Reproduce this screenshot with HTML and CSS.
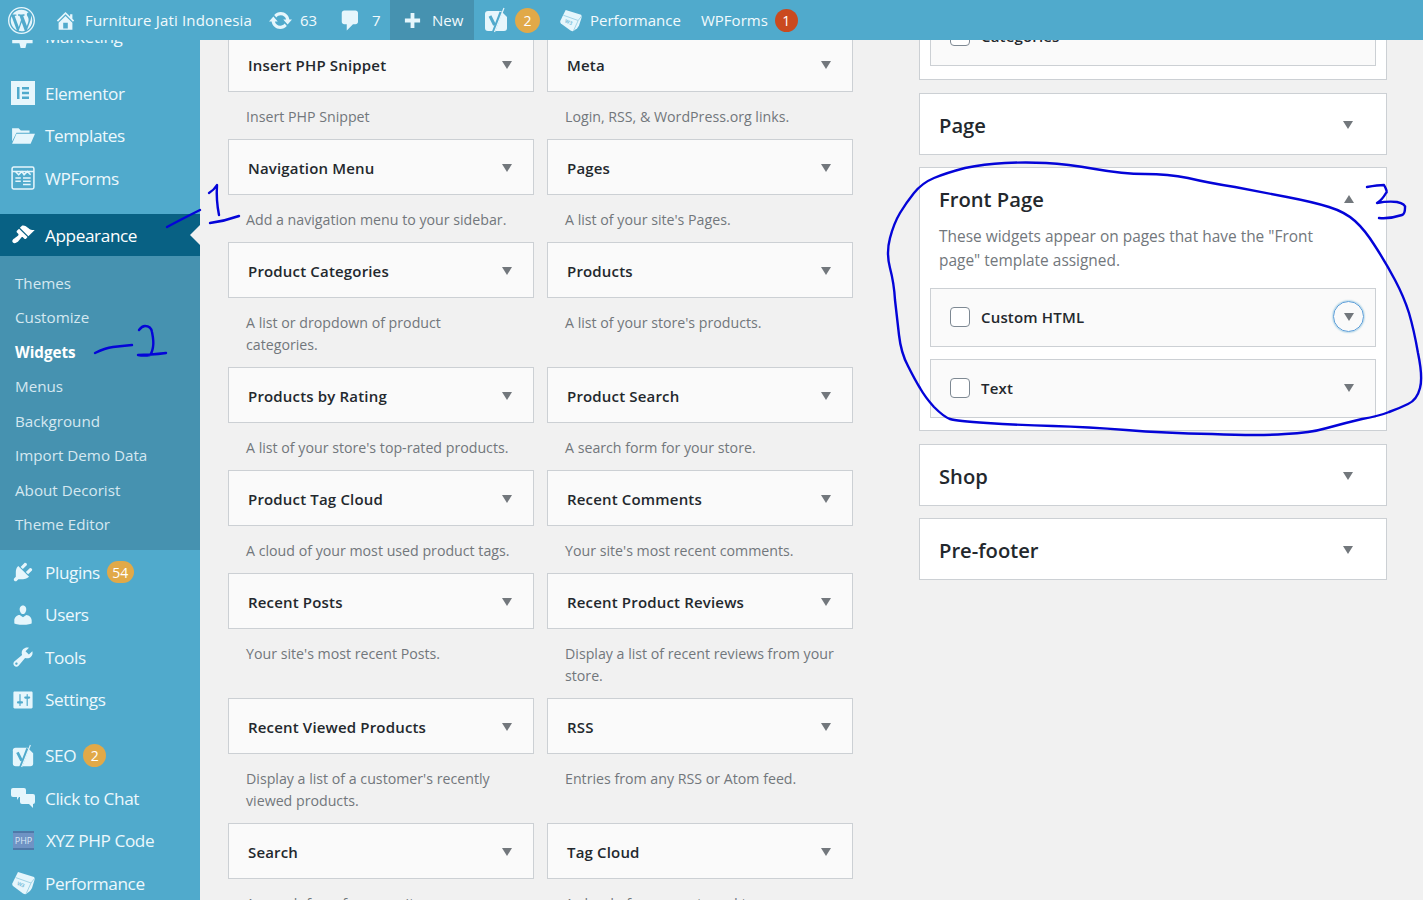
FILE: index.html
```html
<!DOCTYPE html>
<html lang="en">
<head>
    <meta charset="UTF-8">
    <meta name="viewport" content="width=device-width, initial-scale=1.0">
    <title>Widgets - Furniture Jati Indonesia</title>
    <link rel="stylesheet" href="styles.css">
</head>
<body>
    <!-- top admin bar -->
    <header class="adminbar">
        <a class="bar-item bar-logo"><svg class="bar-icon-logo" viewBox="0 0 20 20"><path d="M20 10c0-5.52-4.48-10-10-10S0 4.48 0 10s4.48 10 10 10 10-4.48 10-10zM10 1.01c4.96 0 8.99 4.03 8.99 8.99s-4.03 8.99-8.99 8.99S1.01 14.96 1.01 10 5.04 1.01 10 1.01zM8.01 14.82L4.96 6.61c.49-.03 1.05-.08 1.05-.08.43-.05.38-1.01-.06-.99 0 0-1.29.1-2.13.1-.15 0-.33 0-.52-.01 1.44-2.17 3.9-3.6 6.7-3.6 2.09 0 3.99.79 5.41 2.09-.6-.08-1.45.35-1.45 1.42 0 .66.38 1.22.79 1.88.31.54.5 1.22.5 2.21 0 1.34-1.27 4.48-1.27 4.48l-2.71-7.5c.48-.03.75-.16.75-.16.43-.04.38-1.1-.05-1.08 0 0-1.3.11-2.14.11-.78 0-2.11-.11-2.11-.11-.43-.02-.48 1.06-.05 1.08l.84.08 1.12 3.04zm6.02 2.15L16.64 10s.67-1.69.39-3.81c.63 1.14.94 2.42.94 3.81 0 2.96-1.56 5.58-3.94 6.97zM2.68 6.77L6.5 17.25c-2.67-1.3-4.47-4.08-4.47-7.25 0-1.16.2-2.23.65-3.23zm7.45 4.53l2.29 6.25c-.75.27-1.57.42-2.42.42-.72 0-1.41-.11-2.06-.3z"/></svg></a>
        <a class="bar-item bar-site"><svg class="bar-icon" viewBox="0 0 20 20"><path d="M16 8.5l1.53 1.53-1.06 1.06L10 4.62l-6.47 6.47-1.06-1.06L10 2.5l4 4v-2h2v4zm-6-2.46l6 5.99V18H4v-5.97zM12 17v-5H8v5h4z"/></svg>Furniture Jati Indonesia</a>
        <a class="bar-item bar-updates"><svg class="bar-icon bar-icon-wide" viewBox="0 0 20 20"><path d="M10.2 3.28c3.53 0 6.43 2.61 6.92 6h2.08l-3.5 4-3.5-4h2.32c-.45-1.97-2.21-3.45-4.32-3.45-1.45 0-2.73.71-3.54 1.78L4.95 5.66C6.23 4.2 8.11 3.28 10.2 3.28zm-.4 13.44c-3.52 0-6.43-2.61-6.92-6H.8l3.5-4c1.17 1.33 2.33 2.67 3.5 4H5.48c.45 1.97 2.21 3.45 4.32 3.45 1.45 0 2.73-.71 3.54-1.78l1.71 1.95c-1.28 1.46-3.15 2.38-5.25 2.38z"/></svg>63</a>
        <a class="bar-item bar-comments"><svg class="bar-icon bar-icon-wide" viewBox="0 0 20 20"><path d="M5 2h9q.82 0 1.41.59T16 4v7q0 .82-.59 1.41T14 13h-2l-5 5v-5H5q-.82 0-1.41-.59T3 11V4q0-.82.59-1.41T5 2z"/></svg>7</a>
        <a class="bar-item bar-new"><svg class="bar-icon bar-icon-plus" viewBox="0 0 20 20"><path d="M18 8v4h-6v6H8v-6H2V8h6V2h4v6z"/></svg>New</a>
        <a class="bar-item bar-yoast"><svg class="bar-icon bar-icon-yoast" viewBox="0 0 24 26"><path d="M4 4h13l6 6v11a3 3 0 0 1-3 3H4a3 3 0 0 1-3-3V7a3 3 0 0 1 3-3z"/><path class="cut" d="M6 9l4.5 9M17 5l-8 21"/><path class="slash" d="M20 1l-9.500 24"/></svg><span class="badge badge-orange">2</span></a>
        <a class="bar-item bar-perf"><svg class="bar-icon bar-icon-cube" viewBox="0 0 24 24"><path d="M7 1l16 5q1 1 .5 3L21 17q-.5 1-2 3l-4 3q-1 .5-3-.5L2 15q-1-1-.7-2.500L4 7z"/><path class="cut-thin" d="M4.500 6.500L20 12l-5 11M20 12l3.500-4.500"/><text class="cube-mark" x="6" y="15" transform="rotate(22 9 14)">W3</text></svg>Performance</a>
        <a class="bar-item bar-forms">WPForms<span class="badge badge-red">1</span></a>
    </header>

    <div class="wrap">
        <!-- left menu -->
        <nav class="sidemenu">
            <ul class="menu-group">
                <li class="menu-item"><svg class="menu-icon" viewBox="0 0 20 20"><path d="M1 4h17v12h-5l-1 4H8l-1-4H1z"/></svg>Marketing</li>
            </ul>
            <ul class="menu-group">
                <li class="menu-item"><svg class="menu-icon icon-el" viewBox="0 0 24 24"><path fill-rule="evenodd" d="M0 0h24v24H0zM6 6v12h2.5V6zM11 6v2.500h7V6zM11 10.800v2.400h7v-2.400zM11 15.500V18h7v-2.500z"/></svg>Elementor</li>
                <li class="menu-item"><svg class="menu-icon" viewBox="0 0 22 20"><path d="M1 3h6l2 2h8v2H5L1 15zM5 8h17l-4 9H1z"/></svg>Templates</li>
                <li class="menu-item"><svg class="menu-icon" viewBox="0 0 22 22"><rect class="outline" x="1" y="1" width="20" height="20" rx="1.5"/><path class="outline" d="M1 5h20M4 5l3 3 3-3 2 3 3-3 3 3M4 11h5M11 11h7M4 14h5M11 14h7M11 17h7"/></svg>WPForms</li>
            </ul>
            <ul class="menu-group">
                <li class="menu-item menu-current"><svg class="menu-icon" viewBox="0 0 20 20"><path d="M14.48 11.06L7.41 3.99l1.5-1.5c.5-.56 2.3-.47 3.51.32 1.21.8 1.43 1.28 2.91 2.1 1.18.64 2.45 1.26 4.45.85zm-.71.71L6.7 4.7 4.93 6.47c-.39.39-.39 1.02 0 1.41l1.06 1.06c.39.39.39 1.03 0 1.42-.6.6-1.43 1.11-2.21 1.69-.35.26-.7.53-1.01.84C1.43 13.23.5 15.26 1.65 16.35c1.13 1.1 3.11.19 4.49-1.08.3-.3.58-.65.84-1 .58-.78 1.09-1.61 1.69-2.21.39-.39 1.02-.39 1.41 0l1.06 1.06c.39.39 1.02.39 1.41 0z"/></svg>Appearance</li>
                <li class="submenu">
                    <ul>
                        <li class="sub-item">Themes</li>
                        <li class="sub-item">Customize</li>
                        <li class="sub-item sub-current">Widgets</li>
                        <li class="sub-item">Menus</li>
                        <li class="sub-item">Background</li>
                        <li class="sub-item">Import Demo Data</li>
                        <li class="sub-item">About Decorist</li>
                        <li class="sub-item">Theme Editor</li>
                    </ul>
                </li>
                <li class="menu-item"><svg class="menu-icon" viewBox="0 0 20 20"><path d="M13.11 4.36L9.87 7.6 8 5.73l3.24-3.24c.35-.34 1.05-.2 1.56.32.52.51.66 1.21.31 1.55zm-8 1.77l.91-1.12 9.01 9.01-1.19.84c-.71.71-2.63 1.16-3.82 1.16H6.14L4.9 17.26c-.59.59-1.54.59-2.12 0-.59-.58-.59-1.53 0-2.12l1.24-1.24v-3.88c0-1.13.4-3.19 1.09-3.89zm7.26 3.97l3.24-3.24c.34-.35 1.04-.21 1.55.31.52.51.66 1.21.31 1.55l-3.24 3.25z"/></svg>Plugins<span class="badge badge-orange badge-wide">54</span></li>
                <li class="menu-item"><svg class="menu-icon" viewBox="0 0 20 20"><path d="M10 9.25c-2.27 0-2.73-3.44-2.73-3.44C7 4.02 7.82 2 9.97 2c2.16 0 2.98 2.02 2.71 3.81 0 0-.41 3.44-2.68 3.44zm0 2.57L12.72 10c2.39 0 4.52 2.33 4.52 4.53v2.49s-3.65 1.13-7.24 1.13c-3.65 0-7.24-1.13-7.24-1.13v-2.49c0-2.25 1.94-4.48 4.47-4.48z"/></svg>Users</li>
                <li class="menu-item"><svg class="menu-icon" viewBox="0 0 20 20"><path d="M16.68 9.77c-1.34 1.34-3.3 1.67-4.95.99l-5.41 6.52c-.99.99-2.59.99-3.58 0s-.99-2.59 0-3.57l6.52-5.42c-.68-1.65-.35-3.61.99-4.95 1.28-1.28 3.12-1.62 4.72-1.06l-2.89 2.89 2.82 2.82 2.86-2.87c.53 1.58.18 3.39-1.08 4.65zM3.81 16.21c.4.39 1.04.39 1.43 0 .4-.4.4-1.04 0-1.43-.39-.4-1.03-.4-1.43 0-.39.39-.39 1.03 0 1.43z"/></svg>Tools</li>
                <li class="menu-item"><svg class="menu-icon" viewBox="0 0 20 20"><path fill-rule="evenodd" d="M18 16V4c0-.55-.45-1-1-1H3c-.55 0-1 .45-1 1v12c0 .55.45 1 1 1h14c.55 0 1-.45 1-1zM8 11h1c.55 0 1 .45 1 1s-.45 1-1 1H8v1.5c0 .28-.22.5-.5.5s-.5-.22-.5-.5V13H6c-.55 0-1-.45-1-1s.45-1 1-1h1V5.5c0-.28.22-.5.5-.5s.5.22.5.5V11zm5-2h-1c-.55 0-1-.45-1-1s.45-1 1-1h1V5.5c0-.28.22-.5.5-.5s.5.22.5.5V7h1c.55 0 1 .45 1 1s-.45 1-1 1h-1v5.5c0 .28-.22.5-.5.5s-.5-.22-.5-.5V9z"/></svg>Settings</li>
            </ul>
            <ul class="menu-group">
                <li class="menu-item"><svg class="menu-icon" viewBox="0 0 24 26"><path d="M4 4h13l6 6v11a3 3 0 0 1-3 3H4a3 3 0 0 1-3-3V7a3 3 0 0 1 3-3z"/><path class="cut" d="M6 9l4.5 9M17 5l-8 21"/><path class="slash" d="M20 1l-9.500 24"/></svg>SEO<span class="badge badge-orange">2</span></li>
                <li class="menu-item"><svg class="menu-icon" viewBox="0 0 24 24"><path d="M2 2h11a2 2 0 0 1 2 2v5a2 2 0 0 1-2 2H8l-2 3v-3H2a2 2 0 0 1-2-2V4a2 2 0 0 1 2-2z"/><path d="M11 8h11a2 2 0 0 1 2 2v6a2 2 0 0 1-2 2v4l-4-4h-7a2 2 0 0 1-2-2v-6a2 2 0 0 1 2-2z"/></svg>Click to Chat</li>
                <li class="menu-item"><span class="php-icon">PHP</span>XYZ PHP Code</li>
                <li class="menu-item"><svg class="menu-icon" viewBox="0 0 24 24"><path d="M7 1l16 5q1 1 .5 3L21 17q-.5 1-2 3l-4 3q-1 .5-3-.5L2 15q-1-1-.7-2.500L4 7z"/><path class="cut-thin" d="M4.500 6.500L20 12l-5 11M20 12l3.500-4.500"/><text class="cube-mark" x="6" y="15" transform="rotate(22 9 14)">W3</text></svg>Performance</li>
            </ul>
        </nav>

        <main class="content">
            <!-- available widgets, two columns -->
            <section class="available">
                <div class="widget-cell">
                    <div class="widget-title">Insert PHP Snippet<span class="arrow"></span></div>
                    <p class="widget-desc">Insert PHP Snippet</p>
                </div>
                <div class="widget-cell">
                    <div class="widget-title">Meta<span class="arrow"></span></div>
                    <p class="widget-desc">Login, RSS, &amp; WordPress.org links.</p>
                </div>
                <div class="widget-cell">
                    <div class="widget-title">Navigation Menu<span class="arrow"></span></div>
                    <p class="widget-desc">Add a navigation menu to your sidebar.</p>
                </div>
                <div class="widget-cell">
                    <div class="widget-title">Pages<span class="arrow"></span></div>
                    <p class="widget-desc">A list of your site's Pages.</p>
                </div>
                <div class="widget-cell">
                    <div class="widget-title">Product Categories<span class="arrow"></span></div>
                    <p class="widget-desc">A list or dropdown of product<br>categories.</p>
                </div>
                <div class="widget-cell">
                    <div class="widget-title">Products<span class="arrow"></span></div>
                    <p class="widget-desc">A list of your store's products.</p>
                </div>
                <div class="widget-cell">
                    <div class="widget-title">Products by Rating<span class="arrow"></span></div>
                    <p class="widget-desc">A list of your store's top-rated products.</p>
                </div>
                <div class="widget-cell">
                    <div class="widget-title">Product Search<span class="arrow"></span></div>
                    <p class="widget-desc">A search form for your store.</p>
                </div>
                <div class="widget-cell">
                    <div class="widget-title">Product Tag Cloud<span class="arrow"></span></div>
                    <p class="widget-desc">A cloud of your most used product tags.</p>
                </div>
                <div class="widget-cell">
                    <div class="widget-title">Recent Comments<span class="arrow"></span></div>
                    <p class="widget-desc">Your site's most recent comments.</p>
                </div>
                <div class="widget-cell">
                    <div class="widget-title">Recent Posts<span class="arrow"></span></div>
                    <p class="widget-desc">Your site's most recent Posts.</p>
                </div>
                <div class="widget-cell">
                    <div class="widget-title">Recent Product Reviews<span class="arrow"></span></div>
                    <p class="widget-desc">Display a list of recent reviews from your store.</p>
                </div>
                <div class="widget-cell">
                    <div class="widget-title">Recent Viewed Products<span class="arrow"></span></div>
                    <p class="widget-desc">Display a list of a customer's recently viewed products.</p>
                </div>
                <div class="widget-cell">
                    <div class="widget-title">RSS<span class="arrow"></span></div>
                    <p class="widget-desc">Entries from any RSS or Atom feed.</p>
                </div>
                <div class="widget-cell">
                    <div class="widget-title">Search<span class="arrow"></span></div>
                    <p class="widget-desc">A search form for your site.</p>
                </div>
                <div class="widget-cell">
                    <div class="widget-title">Tag Cloud<span class="arrow"></span></div>
                    <p class="widget-desc">A cloud of your most used tags.</p>
                </div>
            </section>

            <!-- widget areas on the right -->
            <section class="areas">
                <div class="area area-cut">
                    <div class="area-widget"><span class="check"></span>Categories</div>
                </div>
                <div class="area area-closed">Page<span class="arrow"></span></div>
                <div class="area area-open">
                    <h2 class="area-heading">Front Page<span class="arrow arrow-up"></span></h2>
                    <p class="area-desc">These widgets appear on pages that have the "Front page" template assigned.</p>
                    <div class="area-widget"><span class="check"></span>Custom HTML<span class="arrow-focus"><span class="arrow"></span></span></div>
                    <div class="area-widget"><span class="check"></span>Text<span class="arrow"></span></div>
                </div>
                <div class="area area-closed">Shop<span class="arrow"></span></div>
                <div class="area area-closed">Pre-footer<span class="arrow"></span></div>
            </section>
        </main>
    </div>

    <!-- hand drawn pen marks on top of the screenshot -->
    <svg class="pen" viewBox="0 0 1423 900">
        <path d="M167 227Q180 220 200 210"/>
        <path d="M209 193Q214 190 217 185Q216 200 219 215"/>
        <path d="M210 223Q225 221 239 216"/>
        <path d="M95 353Q105 348 113 347Q122 346 132 345"/>
        <path d="M139 330Q142 326 145 326Q151 326 152 332Q154 342 153 347Q152 353 150 355Q144 356 138 355Q150 355 166 353"/>
        <path d="M1367 187Q1378 185 1384 185Q1388 192 1386 193Q1382 200 1377 203Q1388 201 1397 202Q1406 204 1405 208Q1405 214 1402 215Q1390 219 1379 218"/>
        <path d="M934 178Q946 173 965 168Q984 164 1005 163Q1026 162 1046 163Q1067 164 1095 169Q1123 174 1145 174Q1168 174 1188 178Q1209 183 1235 187Q1261 192 1287 197Q1313 202 1329 207Q1345 212 1355 221Q1365 230 1375 246Q1386 263 1395 280Q1404 297 1409 313Q1414 330 1418 353Q1423 377 1420 388Q1417 400 1408 404Q1400 408 1389 412Q1379 416 1362 419Q1345 423 1327 428Q1310 433 1285 434Q1261 436 1212 434Q1164 433 1126 430Q1088 427 1053 426Q1019 425 987 423Q956 421 950 419Q944 417 934 407Q925 397 920 388Q915 380 908 366Q901 353 899 335Q897 317 895 300Q894 283 890 268Q886 253 890 238Q894 223 900 213Q906 203 914 193Q922 183 934 178Z"/>
    </svg>
</body>
</html>
```

FILE: styles.css
```css
* {
    box-sizing: border-box;
}

html, body {
    height: 100%;
}

body {
    margin: 0;
    overflow: hidden;
    position: relative;
    background-color: #f1f1f1;
    font-family: "Open Sans", "Noto Sans", Arial, sans-serif;
    color: #23282d;
}

ul {
    list-style: none;
    margin: 0;
    padding: 0;
}

/* admin bar */
.adminbar {
    display: flex;
    height: 40px;
    background-color: #50aacc;
    color: #f2fafd;
    font-size: 15px;
    position: relative;
    z-index: 2;
}

.bar-item {
    display: flex;
    align-items: center;
    height: 40px;
}

.bar-item svg {
    fill: #e6f6fc;
    flex: none;
}

.bar-logo {
    padding-left: 8px;
    width: 54px;
}

.bar-icon-logo {
    width: 27px;
    height: 27px;
}

.bar-icon {
    width: 23px;
    height: 23px;
    margin-right: 8px;
}

.bar-site {
    width: 214px;
    letter-spacing: 0.17px;
}

.bar-updates {
    width: 70px;
}

.bar-icon-wide {
    width: 25px;
    height: 25px;
    margin-right: 7px;
}

.bar-comments {
    width: 52px;
}

.bar-comments .bar-icon-wide {
    margin-right: 9px;
}

.bar-new {
    width: 84px;
    padding-left: 13px;
    background-color: #4692b0;
}

.bar-icon-plus {
    width: 19px;
    height: 19px;
    margin-right: 10px;
}

.bar-yoast {
    width: 85px;
    padding-left: 10px;
}

.bar-icon-yoast {
    width: 24px;
    height: 26px;
    margin-right: 7px;
}

.bar-perf {
    width: 142px;
}

.bar-icon-cube {
    width: 23px;
    height: 23px;
}

.bar-yoast .badge {
    margin-left: 0;
    width: 25px;
    height: 25px;
}

.cut {
    fill: none;
    stroke: #50aacc;
    stroke-width: 3;
}

.cut-thin {
    fill: none;
    stroke: #9fd3e6;
    stroke-width: 1;
}

.slash {
    fill: none;
    stroke: #e6f6fc;
    stroke-width: 1.2;
}

svg .cube-mark {
    fill: #7cc0da;
    font-size: 5px;
    font-weight: 700;
}

.badge {
    display: inline-flex;
    align-items: center;
    justify-content: center;
    width: 23px;
    height: 23px;
    border-radius: 50%;
    font-size: 14px;
    letter-spacing: 0;
    color: #fff;
    margin-left: 7px;
}

.badge-orange {
    background-color: #e1a948;
}

.badge-red {
    background-color: #ca4a1f;
}

.badge-wide {
    width: 27px;
    height: 22px;
    border-radius: 11px;
}

/* layout below the bar */
.wrap {
    display: flex;
    height: 860px;
    overflow: hidden;
}

/* left menu */
.sidemenu {
    flex: none;
    width: 200px;
    background-color: #50aacc;
    color: #edf8fc;
    font-size: 17.2px;
    margin-top: -25px;
    height: 900px;
}

.menu-group {
    margin-bottom: 14.5px;
}

.menu-group:nth-child(3) {
    margin-bottom: 13.5px;
}

.menu-item {
    display: flex;
    align-items: center;
    height: 42.5px;
    padding-left: 11px;
    position: relative;
    letter-spacing: -0.4px;
}

.menu-icon {
    width: 24px;
    height: 24px;
    margin-right: 10px;
    fill: #e6f6fc;
    flex: none;
}

.menu-icon .outline {
    fill: none;
    stroke: #e6f6fc;
    stroke-width: 1.4;
}

.menu-current {
    height: 42px;
    background-color: #086184;
    color: #fff;
}

.menu-current .menu-icon {
    fill: #fff;
}

.menu-current::after {
    content: "";
    position: absolute;
    right: 0;
    top: 11px;
    border: 10px solid transparent;
    border-left: 0;
    border-right-color: #f1f1f1;
}

.submenu {
    background-color: #4692b0;
    padding: 9.6px 0 8.4px;
    margin-bottom: 1px;
    font-size: 15.2px;
}

.sub-item {
    display: flex;
    align-items: center;
    height: 34.5px;
    padding-left: 15px;
    color: #d5e8f0;
}

.sub-current {
    color: #fff;
    font-weight: 700;
}

.php-icon {
    flex: none;
    width: 21px;
    height: 19px;
    margin: 0 12px 0 2px;
    display: flex;
    align-items: center;
    justify-content: center;
    background-color: #6f93c4;
    border-top: 2px solid #4f79a8;
    border-bottom: 2px solid #4f79a8;
    font-size: 9px;
    letter-spacing: 0;
    color: #dbe9f6;
}

/* main area */
.content {
    flex: 1;
    display: flex;
    align-items: flex-start;
    padding-left: 28px;
}

.available {
    flex: none;
    width: 625px;
    margin-top: -4px;
    display: grid;
    grid-template-columns: 306px 306px;
    column-gap: 13px;
}

.widget-title {
    display: flex;
    align-items: center;
    justify-content: space-between;
    height: 56px;
    padding: 1px 21px 0 19px;
    background-color: #fafafa;
    border: 1px solid #ccd0d4;
    font-size: 15px;
    letter-spacing: 0.17px;
    font-weight: 600;
}

.arrow {
    display: block;
    width: 0;
    height: 0;
    flex: none;
    margin-top: 0;
    border-left: 5.5px solid transparent;
    border-right: 5.5px solid transparent;
    border-top: 8px solid #72777c;
}

.arrow-up {
    border-top: 0;
    border-bottom: 8px solid #72777c;
}

.widget-desc {
    margin: 0;
    padding: 14px 10px 11px 18px;
    font-size: 14.2px;
    line-height: 22px;
    color: #72777c;
}

/* widget areas */
.areas {
    flex: none;
    width: 468px;
    margin-left: 66px;
    margin-top: -33px;
    display: flex;
    flex-direction: column;
}

.area {
    background-color: #fff;
    border: 1px solid #ccd0d4;
    margin-bottom: 13px;
}

.area-cut {
    padding: 0 10px 13px;
    border-top: 0;
}

.area-closed {
    display: flex;
    align-items: center;
    justify-content: space-between;
    height: 62px;
    padding: 1px 33px 0 19px;
    font-size: 20.2px;
    font-weight: 600;
    margin-bottom: 12px;
}

.area-open {
    height: 264px;
    padding: 0 10px;
}

.area-heading {
    display: flex;
    align-items: center;
    justify-content: space-between;
    margin: 0;
    padding: 8px 22px 0 9px;
    height: 54px;
    font-size: 20.2px;
    font-weight: 600;
}

.area-desc {
    margin: 2px 0 0;
    padding: 0 9px;
    height: 64px;
    font-size: 15.45px;
    line-height: 24px;
    color: #72777c;
    width: 430px;
}

.area-widget {
    display: flex;
    align-items: center;
    height: 59px;
    padding: 0 21px 2px 19px;
    margin-bottom: 12px;
    background-color: #fafafa;
    border: 1px solid #ccd0d4;
    font-size: 15px;
    letter-spacing: 0.17px;
    font-weight: 600;
    position: relative;
}

.area-cut .area-widget {
    margin-bottom: 0;
}

.check {
    flex: none;
    width: 20px;
    height: 20px;
    margin-right: 11px;
    background-color: #fff;
    border: 1px solid #7e8993;
    border-radius: 4px;
}

.area-widget > .arrow {
    margin-left: auto;
}

.arrow-focus {
    margin-left: auto;
    margin-right: -10px;
    margin-top: -1px;
    width: 31px;
    height: 31px;
    display: flex;
    align-items: center;
    justify-content: center;
    border: 1px solid #5b9dd9;
    border-radius: 50%;
    box-shadow: 0 0 2px rgba(30, 140, 190, 0.8);
}

.arrow-focus .arrow {
    margin-top: 1px;
}

/* pen marks */
.pen {
    position: absolute;
    left: 0;
    top: 0;
    width: 1423px;
    height: 900px;
    z-index: 3;
    pointer-events: none;
    fill: none;
    stroke: #0404d8;
    stroke-width: 2.4;
    stroke-linecap: round;
    stroke-linejoin: round;
}
```
